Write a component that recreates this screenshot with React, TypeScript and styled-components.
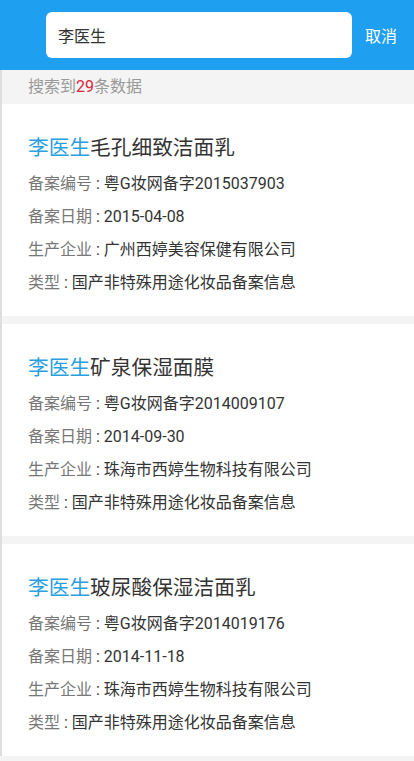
import React from 'react';
import styled, { createGlobalStyle } from 'styled-components';

const GlobalStyle = createGlobalStyle`
  html, body {
    margin: 0;
    padding: 0;
    background: #f4f4f4;
    font-family: Roboto, "Noto Sans CJK SC", sans-serif;
  }
`;

const Page = styled.div`
  width: 414px;
  min-height: 761px;
  background: #f4f4f4;
`;

const Header = styled.div`
  display: flex;
  align-items: center;
  height: 70px;
  box-sizing: border-box;
  padding: 12px 17px 12px 46px;
  background: #1f9ff0;
`;

const SearchBox = styled.div`
  flex: 1;
  display: flex;
  align-items: center;
  height: 46px;
  padding: 0 12px;
  border-radius: 6px;
  background: #ffffff;
  font-size: 16px;
  color: #333;
`;

const Cancel = styled.span`
  margin-left: 13px;
  font-size: 16px;
  color: #ffffff;
`;

const Body = styled.div`
  border-left: 2px solid #dedede;
`;

const Summary = styled.div`
  height: 34px;
  line-height: 34px;
  padding-left: 26px;
  font-size: 16px;
  color: #999;
`;

const Count = styled.span`
  color: #d9263a;
`;

const Card = styled.div`
  padding: 30px 26px 17px;
  background: #ffffff;
  & + & {
    margin-top: 8px;
  }
`;

const Title = styled.div`
  height: 28px;
  line-height: 28px;
  margin-bottom: 5px;
  font-size: 20.7px;
  color: #333;
`;

const Brand = styled.span`
  color: #2a9fe0;
`;

const Row = styled.div`
  height: 33px;
  line-height: 33px;
  font-size: 16px;
  color: #333;
  white-space: nowrap;
`;

const Label = styled.span`
  color: #777;
`;

interface Item {
  name: string;
  code: string;
  date: string;
  company: string;
}

const items: Item[] = [
  {
    name: '毛孔细致洁面乳',
    code: '粤G妆网备字2015037903',
    date: '2015-04-08',
    company: '广州西婷美容保健有限公司',
  },
  {
    name: '矿泉保湿面膜',
    code: '粤G妆网备字2014009107',
    date: '2014-09-30',
    company: '珠海市西婷生物科技有限公司',
  },
  {
    name: '玻尿酸保湿洁面乳',
    code: '粤G妆网备字2014019176',
    date: '2014-11-18',
    company: '珠海市西婷生物科技有限公司',
  },
];

export default function App() {
  return (
    <Page>
      <GlobalStyle />
      <Header>
        <SearchBox>李医生</SearchBox>
        <Cancel>取消</Cancel>
      </Header>
      <Body>
        <Summary>
          搜索到<Count>29</Count>条数据
        </Summary>
        {items.map((item) => (
          <Card key={item.code}>
            <Title>
              <Brand>李医生</Brand>
              {item.name}
            </Title>
            <Row>
              <Label>备案编号</Label> : {item.code}
            </Row>
            <Row>
              <Label>备案日期</Label> : {item.date}
            </Row>
            <Row>
              <Label>生产企业</Label> : {item.company}
            </Row>
            <Row>
              <Label>类型</Label> : 国产非特殊用途化妆品备案信息
            </Row>
          </Card>
        ))}
      </Body>
    </Page>
  );
}
